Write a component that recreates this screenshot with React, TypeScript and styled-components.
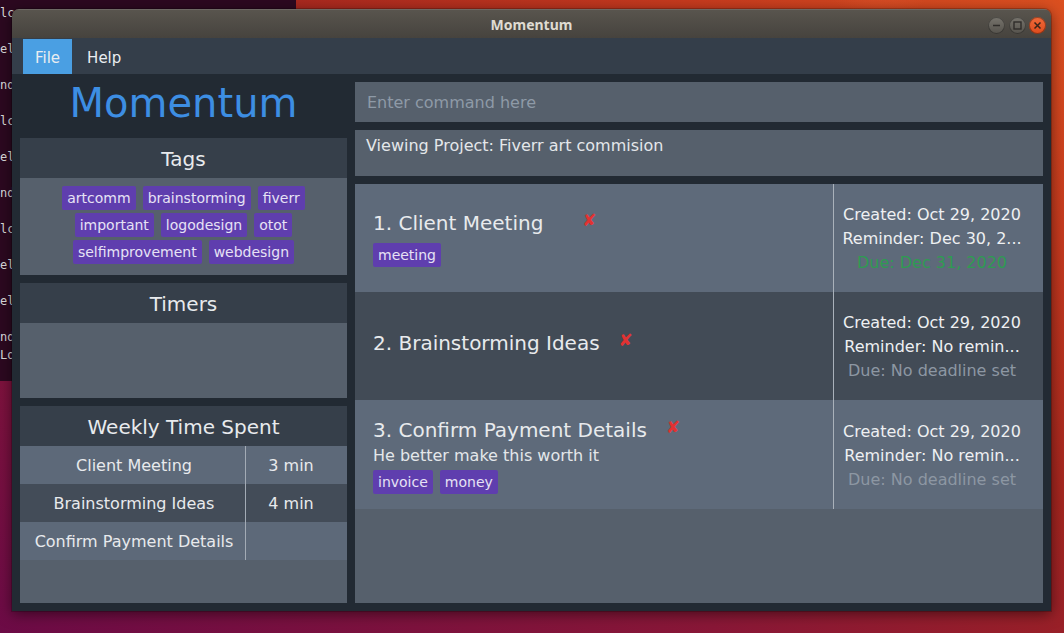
import React from "react";
import styled, { createGlobalStyle } from "styled-components";

const GlobalStyle = createGlobalStyle`
  html, body {
    margin: 0;
    padding: 0;
    width: 1064px;
    height: 633px;
    overflow: hidden;
  }
  body {
    font-family: "DejaVu Sans", Verdana, sans-serif;
  }
  * { box-sizing: border-box; }
`;

const Desktop = styled.div`
  position: relative;
  width: 1064px;
  height: 633px;
  overflow: hidden;
  background:
    radial-gradient(circle at 880px -40px, rgba(236, 104, 58, 0.45) 0, rgba(236, 104, 58, 0) 62px),
    linear-gradient(to top right, #6c0b46 0%, #891737 34%, #a2251f 60%, #c53a1e 82%, #db5020 100%);
`;

const Terminal = styled.div`
  position: absolute;
  left: 0;
  top: 0;
  width: 296px;
  height: 381px;
  background: #2c0920;
  padding-top: 4px;
  font-family: "DejaVu Sans Mono", "Liberation Mono", monospace;
  font-size: 12px;
  line-height: 18px;
  color: #dcdcdc;
  white-space: pre;
  overflow: hidden;
`;

const Window = styled.div`
  position: absolute;
  left: 12px;
  top: 9px;
  width: 1039px;
  height: 602px;
  display: flex;
  flex-direction: column;
  border-radius: 7px 7px 0 0;
  overflow: hidden;
  box-shadow: 0 3px 14px rgba(0, 0, 0, 0.5), 0 0 0 1px rgba(0, 0, 0, 0.2);
`;

const TitleBar = styled.div`
  height: 29px;
  flex: none;
  display: grid;
  grid-template-columns: 1fr auto 1fr;
  align-items: center;
  background: linear-gradient(#59554e, #46433e);
  box-shadow: inset 0 1px 0 rgba(255, 255, 255, 0.12);
`;

const TitleText = styled.div`
  grid-column: 2;
  font-family: "Noto Sans", "Open Sans", sans-serif;
  font-weight: 700;
  font-size: 14px;
  color: #dfdbd2;
  padding-top: 1px;
`;

const Controls = styled.div`
  grid-column: 3;
  justify-self: end;
  display: flex;
  gap: 3.5px;
  padding: 3px 5px 0 0;
`;

const CircleButton = styled.div<{ $close?: boolean }>`
  width: 17px;
  height: 17px;
  border-radius: 50%;
  display: flex;
  align-items: center;
  justify-content: center;
  background: ${(p) =>
    p.$close
      ? "linear-gradient(#f06a3a, #dc4b1c)"
      : "linear-gradient(#77746d, #55524c)"};
  box-shadow: inset 0 0 0 1px rgba(0, 0, 0, 0.35);
`;

const MenuBar = styled.div`
  height: 36px;
  flex: none;
  display: flex;
  align-items: stretch;
  gap: 3px;
  padding: 1px 0 0 11px;
  background: #343e4a;
`;

const MenuItem = styled.div<{ $active?: boolean }>`
  display: flex;
  align-items: center;
  padding: 2px 12px 0;
  font-size: 15px;
  color: #e9edf1;
  background: ${(p) => (p.$active ? "#4a9fe3" : "transparent")};
`;

const Content = styled.div`
  flex: 1;
  display: flex;
  gap: 8px;
  padding: 8px;
  background: #222a33;
`;

const LeftPanel = styled.div`
  width: 327px;
  flex: none;
  display: flex;
  flex-direction: column;
  gap: 8px;
`;

const Logo = styled.div`
  height: 48px;
  flex: none;
  text-align: center;
  font-size: 40px;
  line-height: 40px;
  padding-top: 1px;
  color: #3d8ee3;
`;

const Card = styled.div<{ $h?: number }>`
  display: flex;
  flex-direction: column;
  background: #56606c;
  ${(p) => (p.$h ? `height: ${p.$h}px; flex: none;` : "flex: 1;")}
`;

const CardHeader = styled.div`
  height: 40px;
  flex: none;
  display: flex;
  align-items: center;
  justify-content: center;
  padding-top: 2px;
  background: #363f4a;
  font-size: 20px;
  color: #e8eaed;
`;

const TagCloud = styled.div`
  flex: 1;
  display: flex;
  flex-wrap: wrap;
  justify-content: center;
  align-content: flex-start;
  gap: 3px 7px;
  padding: 8px;
`;

const Tag = styled.span`
  display: inline-block;
  height: 24px;
  line-height: 25px;
  padding: 0 5px;
  font-size: 14px;
  color: #e6e2f5;
  background: #5f3eae;
  border-radius: 2px;
  white-space: nowrap;
`;

const TimeRow = styled.div<{ $dark?: boolean }>`
  display: grid;
  grid-template-columns: 225px 1fr;
  height: 38px;
  background: ${(p) => (p.$dark ? "#434c58" : "#5d6979")};
`;

const TimeCell = styled.div<{ $value?: boolean }>`
  display: flex;
  align-items: center;
  justify-content: center;
  font-size: 16px;
  color: #e8eaed;
  white-space: nowrap;
  ${(p) =>
    p.$value
      ? "border-left: 1px solid #a3abb5; padding-right: 11px;"
      : "padding-left: 3px;"}
`;

const RightPanel = styled.div`
  flex: 1;
  display: flex;
  flex-direction: column;
  gap: 8px;
`;

const CommandInput = styled.input`
  height: 40px;
  flex: none;
  border: none;
  outline: none;
  padding: 0 12px;
  background: #56606c;
  font-family: "DejaVu Sans", Verdana, sans-serif;
  font-size: 16px;
  color: #e8eaed;
  &::placeholder {
    color: #8e9aa7;
  }
`;

const ResultBox = styled.div`
  height: 46px;
  flex: none;
  padding: 6px 11px 0;
  background: #56606c;
  font-size: 16px;
  line-height: 20px;
  color: #e4e7ea;
`;

const ProjectList = styled.div`
  flex: 1;
  display: flex;
  flex-direction: column;
  background: #56606c;
`;

const ProjectCard = styled.div<{ $dark?: boolean; $h: number }>`
  height: ${(p) => p.$h}px;
  flex: none;
  display: flex;
  background: ${(p) => (p.$dark ? "#424b56" : "#5e6a7a")};
`;

const CardMain = styled.div`
  flex: 1;
  display: flex;
  flex-direction: column;
  justify-content: center;
  gap: 4px;
  padding: 2px 0 0 18px;
`;

const TitleRow = styled.div`
  display: flex;
  align-items: flex-start;
  height: 24px;
`;

const ProjectTitle = styled.div`
  font-size: 20px;
  line-height: 24px;
  color: #e8eaed;
  white-space: nowrap;
`;

const DeleteMark = styled.span<{ $gap: number }>`
  margin-left: ${(p) => p.$gap}px;
  margin-top: -1px;
  font-size: 17px;
  line-height: 20px;
  color: #e23232;
`;

const Description = styled.div`
  font-size: 16px;
  line-height: 20px;
  color: #e4e7ea;
`;

const TagRow = styled.div`
  display: flex;
  gap: 7px;
`;

const CardMeta = styled.div`
  width: 210px;
  flex: none;
  display: flex;
  flex-direction: column;
  justify-content: center;
  align-items: center;
  padding: 2px 21px 0 8px;
  border-left: 1px solid #a9b1ba;
  font-size: 16px;
  line-height: 24px;
  color: #eef0f2;
  white-space: nowrap;
`;

const DueLine = styled.div<{ $set?: boolean }>`
  color: ${(p) => (p.$set ? "#2f9b52" : "#8d97a3")};
`;

const allTags = [
  "artcomm",
  "brainstorming",
  "fiverr",
  "important",
  "logodesign",
  "otot",
  "selfimprovement",
  "webdesign",
];

const weekly = [
  { name: "Client Meeting", time: "3 min" },
  { name: "Brainstorming Ideas", time: "4 min" },
  { name: "Confirm Payment Details", time: "" },
];

const projects = [
  {
    title: "1. Client Meeting",
    desc: "",
    tags: ["meeting"],
    reminder: "Reminder: Dec 30, 2...",
    due: "Due: Dec 31, 2020",
    dueSet: true,
    gap: 39,
    h: 108,
  },
  {
    title: "2. Brainstorming Ideas",
    desc: "",
    tags: [] as string[],
    reminder: "Reminder: No remin...",
    due: "Due: No deadline set",
    dueSet: false,
    gap: 19,
    h: 108,
  },
  {
    title: "3. Confirm Payment Details",
    desc: "He better make this worth it",
    tags: ["invoice", "money"],
    reminder: "Reminder: No remin...",
    due: "Due: No deadline set",
    dueSet: false,
    gap: 19,
    h: 109,
  },
];

const terminalLines = [
  "lc", "", "el", "", "nd", "", "lc", "", "el", "", "nd", "", "lc", "", "el", "", "el", "", "nd", "Lo",
];

const MinIcon = () => (
  <svg width="9" height="9" viewBox="0 0 9 9">
    <path d="M1 4.5h7" stroke="#2f2d2a" strokeWidth="1.6" />
  </svg>
);
const MaxIcon = () => (
  <svg width="9" height="9" viewBox="0 0 9 9">
    <rect x="1" y="1" width="7" height="7" fill="none" stroke="#2f2d2a" strokeWidth="1.4" />
  </svg>
);
const CloseIcon = () => (
  <svg width="9" height="9" viewBox="0 0 9 9">
    <path d="M1.5 1.5l6 6M7.5 1.5l-6 6" stroke="#3a2418" strokeWidth="1.5" />
  </svg>
);

export default function App() {
  return (
    <>
      <GlobalStyle />
      <Desktop>
        <Terminal>
          {terminalLines.map((l, i) => (
            <div key={i}>{l || " "}</div>
          ))}
        </Terminal>
        <Window>
          <TitleBar>
            <TitleText>Momentum</TitleText>
            <Controls>
              <CircleButton><MinIcon /></CircleButton>
              <CircleButton><MaxIcon /></CircleButton>
              <CircleButton $close><CloseIcon /></CircleButton>
            </Controls>
          </TitleBar>
          <MenuBar>
            <MenuItem $active>File</MenuItem>
            <MenuItem>Help</MenuItem>
          </MenuBar>
          <Content>
            <LeftPanel>
              <Logo>Momentum</Logo>
              <Card $h={137}>
                <CardHeader>Tags</CardHeader>
                <TagCloud>
                  {allTags.map((t) => (
                    <Tag key={t}>{t}</Tag>
                  ))}
                </TagCloud>
              </Card>
              <Card $h={115}>
                <CardHeader>Timers</CardHeader>
              </Card>
              <Card>
                <CardHeader>Weekly Time Spent</CardHeader>
                {weekly.map((w, i) => (
                  <TimeRow key={w.name} $dark={i % 2 === 1}>
                    <TimeCell>{w.name}</TimeCell>
                    <TimeCell $value>{w.time}</TimeCell>
                  </TimeRow>
                ))}
              </Card>
            </LeftPanel>
            <RightPanel>
              <CommandInput placeholder="Enter command here" />
              <ResultBox>Viewing Project: Fiverr art commision</ResultBox>
              <ProjectList>
                {projects.map((p, i) => (
                  <ProjectCard key={p.title} $h={p.h} $dark={i % 2 === 1}>
                    <CardMain>
                      <TitleRow>
                        <ProjectTitle>{p.title}</ProjectTitle>
                        <DeleteMark $gap={p.gap}>✘</DeleteMark>
                      </TitleRow>
                      <Description>{p.desc}</Description>
                      <TagRow>
                        {p.tags.map((t) => (
                          <Tag key={t}>{t}</Tag>
                        ))}
                      </TagRow>
                    </CardMain>
                    <CardMeta>
                      <div>Created: Oct 29, 2020</div>
                      <div>{p.reminder}</div>
                      <DueLine $set={p.dueSet}>{p.due}</DueLine>
                    </CardMeta>
                  </ProjectCard>
                ))}
              </ProjectList>
            </RightPanel>
          </Content>
        </Window>
      </Desktop>
    </>
  );
}
